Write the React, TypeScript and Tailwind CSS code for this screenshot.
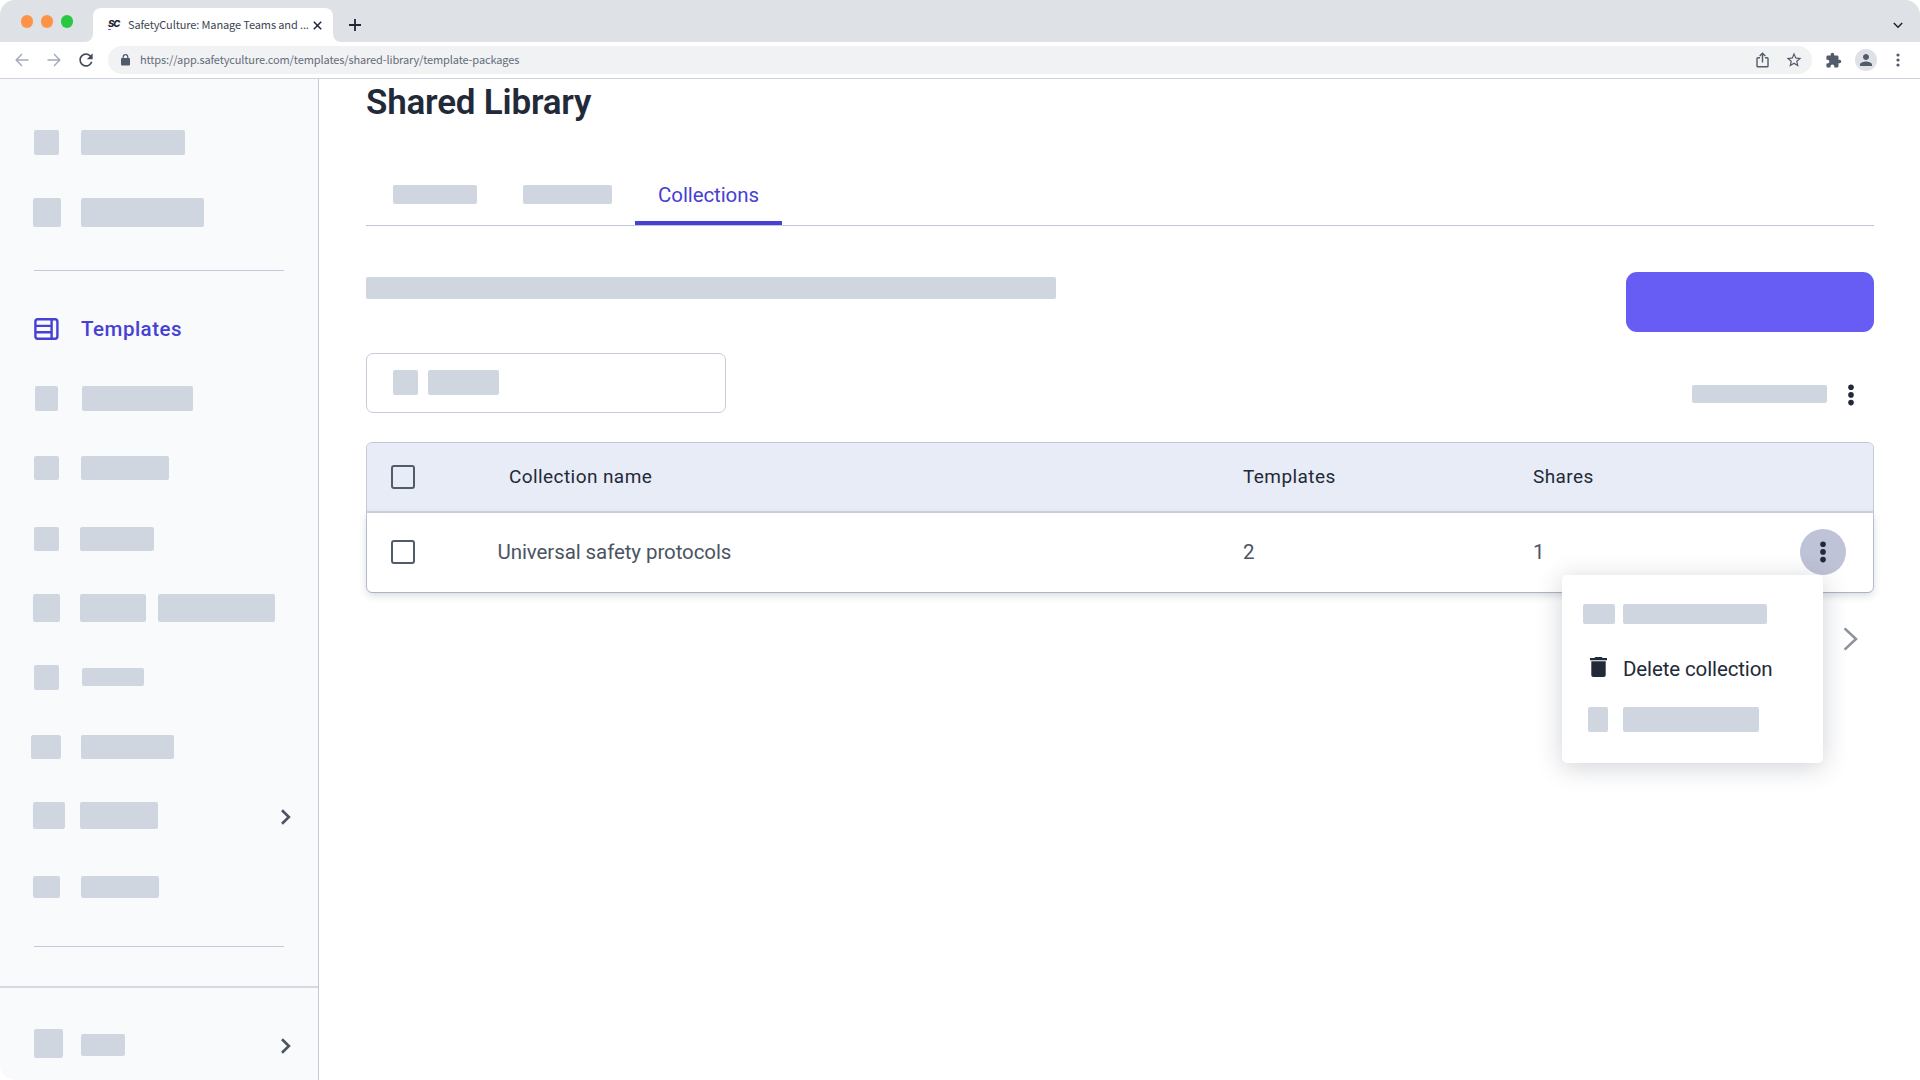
import type { ReactNode } from "react";
import clsx from "clsx";
import { MdExtension, MdPerson, MdRefresh, MdStarBorder } from "react-icons/md";

const Block = ({ className }: { className: string }) => <span className={clsx("block shrink-0 rounded-[2px] bg-[#d0d6e0]", className)} />;

const Dots = ({ className }: { className?: string }) => (
    <svg width="8" height="22" viewBox="0 0 8 22" fill="currentColor" className={clsx("shrink-0", className)}>
        <circle cx="4" cy="3.2" r="2.8" />
        <circle cx="4" cy="10.9" r="2.8" />
        <circle cx="4" cy="18.6" r="2.8" />
    </svg>
);

const Chevron = () => (
    <svg width="12" height="18" viewBox="0 0 12 18" fill="none" stroke="#4b5463" strokeWidth="2.6" className="ml-auto mr-[26px] shrink-0">
        <path d="M2 2.2 L8.9 9 L2 15.8" />
    </svg>
);

const Checkbox = () => <span className="block h-6 w-6 shrink-0 rounded-[3px] border-[2.5px] border-[#525b69]" />;

const TemplatesIcon = () => (
    <svg width="25" height="22" viewBox="0 0 25 22" fill="none" stroke="#4740d4" strokeWidth="2.4" className="shrink-0">
        <rect x="1.4" y="1.3" width="22" height="19.4" rx="2.4" />
        <path d="M17.6 1.3V20.7M1.3 7.9H17.6M1.3 14.2H17.6" />
    </svg>
);

const TrashIcon = () => (
    <svg width="17" height="20" viewBox="0 0 17 20" fill="currentColor" className="shrink-0">
        <path d="M5.4 0H11.6L12.6 1.1H17V3.3H0V1.1H4.4Z" />
        <path d="M1.3 4.3H15.7V18Q15.7 20 13.7 20H3.3Q1.3 20 1.3 18Z" />
    </svg>
);

const LockIcon = () => (
    <svg width="9" height="12" viewBox="0 0 9 12" className="shrink-0">
        <rect y="4" width="9" height="7.6" rx="1" fill="currentColor" />
        <path d="M2.2 4.5V3A2.3 2.3 0 0 1 6.8 3V4.5" fill="none" stroke="currentColor" strokeWidth="1.2" />
    </svg>
);

const SideRow = ({ className, children }: { className: string; children: ReactNode }) => (
    <div className={clsx("flex shrink-0 items-center", className)}>{children}</div>
);

const TabStrip = () => (
    <div className="flex h-[42px] shrink-0 items-end bg-[#dee1e6]">
        <div className="mb-[14.5px] ml-[20.5px] flex w-[72.5px] gap-[7.5px]">
            <span className="h-[12.5px] w-[12.5px] rounded-full bg-[#fd9347]" />
            <span className="h-[12.5px] w-[12.5px] rounded-full bg-[#fd9347]" />
            <span className="h-[12.5px] w-[12.5px] rounded-full bg-[#28c840]" />
        </div>
        <div className="relative flex h-[34px] w-[240px] items-center rounded-t-lg bg-white pl-[15px] text-[#3c4452]">
            <svg width="8" height="8" className="absolute bottom-0 -left-2">
                <path d="M8 0V8H0A8 8 0 0 0 8 0Z" fill="#fff" />
            </svg>
            <svg width="8" height="8" className="absolute -right-2 bottom-0">
                <path d="M0 0V8H8A8 8 0 0 1 0 0Z" fill="#fff" />
            </svg>
            <span className="flex w-[20px] flex-col">
                <span className="font-['Inter',sans-serif] text-[9.5px] leading-[8px] font-extrabold tracking-[-1px] text-[#1f2533] italic">SC</span>
                <span className="mt-px h-px w-[3px] bg-[#675df4]" />
            </span>
            <span className="mb-[2px] font-['Noto_Sans_CJK_SC',sans-serif] text-[11px] tracking-[-0.12px] whitespace-nowrap">
                SafetyCulture: Manage Teams and ...
            </span>
            <svg width="9" height="9" viewBox="0 0 9 9" stroke="#1f2533" strokeWidth="1.5" className="absolute top-[12.5px] left-[219.5px]">
                <path d="M0.8 0.8 L8.2 8.2 M8.2 0.8 L0.8 8.2" />
            </svg>
        </div>
        <svg width="12" height="12" viewBox="0 0 12 12" stroke="#1f2533" strokeWidth="1.8" className="mb-[11px] ml-[16px]">
            <path d="M6 0V12M0 6H12" />
        </svg>
        <svg width="10" height="7" viewBox="0 0 10 7" fill="none" stroke="#1f2533" strokeWidth="1.6" className="mr-[17px] mb-[13px] ml-auto">
            <path d="M0.8 1 L5 5.2 L9.2 1" />
        </svg>
    </div>
);

const Toolbar = () => (
    <div className="flex h-[37px] shrink-0 items-center border-b border-[#cdd3de] bg-white text-[#525b69]">
        <svg width="14" height="14" viewBox="0 0 14 14" fill="none" stroke="#a3a9b8" strokeWidth="1.4" className="ml-[15px]">
            <path d="M13.5 7H1.3M7 1L1.2 7L7 13" />
        </svg>
        <svg width="14" height="14" viewBox="0 0 14 14" fill="none" stroke="#a3a9b8" strokeWidth="1.4" className="ml-[18px]">
            <path d="M0.5 7H12.7M7 1L12.8 7L7 13" />
        </svg>
        <MdRefresh size={20} className="ml-[15px] text-[#434b59]" />
        <div className="ml-[12px] flex h-7 w-[1704px] items-center rounded-full bg-[#f1f2f4] pl-[13px]">
            <LockIcon />
            <span className="mb-[2px] ml-[10px] font-['Noto_Sans_CJK_SC',sans-serif] text-[11px] tracking-[-0.12px] whitespace-nowrap text-[#646c7a]">
                https://app.safetyculture.com/templates/shared-library/template-packages
            </span>
            <svg width="13" height="16" viewBox="0 0 13 16" fill="none" stroke="currentColor" strokeWidth="1.4" className="ml-auto">
                <path d="M4 5.7H1.8Q1 5.7 1 6.5V14Q1 14.8 1.8 14.8H11.2Q12 14.8 12 14V6.5Q12 5.7 11.2 5.7H9M6.5 10.5V1.5M3.7 4L6.5 1.2L9.3 4" />
            </svg>
            <MdStarBorder size={18} className="mr-[9px] ml-[16px]" />
        </div>
        <MdExtension size={17} className="ml-[13px]" />
        <span className="ml-[13px] flex h-[22px] w-[22px] items-center justify-center rounded-full bg-[#dee1e6]">
            <MdPerson size={18} />
        </span>
        <svg width="4" height="14" viewBox="0 0 4 14" fill="currentColor" className="ml-[19px]">
            <circle cx="2" cy="2" r="1.6" />
            <circle cx="2" cy="7" r="1.6" />
            <circle cx="2" cy="12" r="1.6" />
        </svg>
    </div>
);

const Sidebar = () => (
    <aside className="flex w-[319px] shrink-0 flex-col border-r border-[#c2c8d8] bg-[#f9fafc]">
        <SideRow className="mt-[51px] h-[25px] pl-[34px]">
            <Block className="h-[25px] w-[25px]" />
            <Block className="ml-[22px] h-[25px] w-[104px]" />
        </SideRow>
        <SideRow className="mt-[43px] h-[29px] pl-[33px]">
            <Block className="h-[29px] w-[28px]" />
            <Block className="ml-[20px] h-[29px] w-[123px]" />
        </SideRow>
        <hr className="mt-[43px] mr-[34px] ml-[34px] h-px shrink-0 border-0 bg-[#c2cad9]" />
        <SideRow className="mt-[47px] h-[22px] pl-[34px]">
            <TemplatesIcon />
            <span className="ml-[22px] text-[20.5px] font-medium tracking-[0.5px] text-[#4740d4]">Templates</span>
        </SideRow>
        <SideRow className="mt-[46px] h-[25px] pl-[35px]">
            <Block className="h-[25px] w-[23px]" />
            <Block className="ml-[24px] h-[25px] w-[111px]" />
        </SideRow>
        <SideRow className="mt-[45px] h-[24px] pl-[34px]">
            <Block className="h-[24px] w-[25px]" />
            <Block className="ml-[22px] h-[24px] w-[88px]" />
        </SideRow>
        <SideRow className="mt-[47px] h-[24px] pl-[34px]">
            <Block className="h-[24px] w-[25px]" />
            <Block className="ml-[21px] h-[24px] w-[74px]" />
        </SideRow>
        <SideRow className="mt-[43px] h-[28px] pl-[33px]">
            <Block className="h-[28px] w-[27px]" />
            <Block className="ml-[20px] h-[28px] w-[66px]" />
            <Block className="ml-[12px] h-[28px] w-[117px]" />
        </SideRow>
        <SideRow className="mt-[43px] h-[25px] pl-[34px]">
            <Block className="h-[25px] w-[25px]" />
            <Block className="mb-px ml-[23px] h-[18px] w-[62px]" />
        </SideRow>
        <SideRow className="mt-[45px] h-[24px] pl-[31px]">
            <Block className="h-[24px] w-[30px]" />
            <Block className="ml-[20px] h-[24px] w-[93px]" />
        </SideRow>
        <SideRow className="mt-[43px] h-[27px] pl-[33px]">
            <Block className="h-[27px] w-[32px]" />
            <Block className="ml-[15px] h-[27px] w-[78px]" />
            <div className="mt-[3px] ml-auto flex">
                <Chevron />
            </div>
        </SideRow>
        <SideRow className="mt-[47px] h-[22px] pl-[33px]">
            <Block className="h-[22px] w-[27px]" />
            <Block className="ml-[21px] h-[22px] w-[78px]" />
        </SideRow>
        <hr className="mt-[48px] mr-[34px] ml-[34px] h-px shrink-0 border-0 bg-[#c2cad9]" />
        <div className="mt-[39px] flex flex-1 flex-col border-t-2 border-[#d3d8e2] pt-[41px]">
            <SideRow className="h-[29px] pl-[34px]">
                <Block className="h-[29px] w-[29px]" />
                <Block className="mt-[2px] ml-[18px] h-[22px] w-[44px]" />
                <div className="mt-[5px] ml-auto flex">
                    <Chevron />
                </div>
            </SideRow>
        </div>
    </aside>
);

const RowMenu = () => (
    <div className="absolute top-[62px] right-[50px] flex h-[188px] w-[261px] flex-col rounded-[5px] bg-white pt-[29px] shadow-[0_4px_26px_rgba(40,50,75,0.22)]">
        <div className="flex h-[20px] pl-[21px]">
            <Block className="h-[20px] w-[32px]" />
            <Block className="ml-[8px] h-[20px] w-[144px]" />
        </div>
        <div className="mt-[30px] flex h-[28px] items-center pl-[28px] text-[#222938]">
            <div className="-mt-[2px]">
                <TrashIcon />
            </div>
            <span className="mt-[3px] ml-[16px] text-[20.5px] tracking-[-0.12px] whitespace-nowrap">Delete collection</span>
        </div>
        <div className="mt-[25px] flex h-[25px] pl-[26px]">
            <Block className="h-[25px] w-[20px]" />
            <Block className="ml-[15px] h-[25px] w-[136px]" />
        </div>
    </div>
);

const CollectionsTable = () => (
    <div className="mt-[29px] h-[151px] rounded-[6px] border border-[#c2c8da] bg-white">
        <div className="flex h-[70px] items-center rounded-t-[5px] border-b-2 border-[#cdd4e0] bg-[#e8ecf6] pl-[24px] text-[19px] tracking-[0.42px] text-[#222938]">
            <Checkbox />
            <span className="mt-px ml-[94px] w-[734px]">Collection name</span>
            <span className="mt-px w-[290px]">Templates</span>
            <span className="mt-px">Shares</span>
        </div>
        <div className="relative flex h-[79px] items-center rounded-b-[5px] pb-[2px] pl-[24px] text-[20.5px] text-[#4b5463] shadow-[0_3px_8px_rgba(40,50,75,0.2)]">
            <Checkbox />
            <span className="mt-px ml-[82.5px] w-[745.5px] tracking-[-0.09px]">Universal safety protocols</span>
            <span className="mt-px w-[290px]">2</span>
            <span className="mt-px">1</span>
            <span className="mr-[27px] ml-auto flex h-[46px] w-[46px] items-center justify-center rounded-full bg-[#bfc3d7]">
                <Dots className="text-[#222938]" />
            </span>
            <RowMenu />
        </div>
    </div>
);

const Main = () => (
    <main className="flex flex-1 flex-col bg-white pr-[46px] pl-[47px]">
        <h1 className="mt-[3px] h-[42px] text-[35px] leading-[42px] font-semibold tracking-[-0.2px] whitespace-nowrap text-[#222938]">
            Shared Library
        </h1>
        <div className="mt-[44px] flex h-[58px] border-b border-[#bfc6d8]">
            <Block className="mt-[17px] ml-[27px] h-[19px] w-[84px]" />
            <Block className="mt-[17px] ml-[46px] h-[19px] w-[89px]" />
            <div className="ml-[23px] flex h-[57px] w-[147px] flex-col items-center border-b-[4px] border-[#4740d4] pt-[11px] text-[20.5px] leading-[32px] tracking-[-0.1px] text-[#4740d4]">
                Collections
            </div>
        </div>
        <div className="mt-[46px] flex h-[60px] items-start justify-between">
            <Block className="mt-[5px] h-[22px] w-[690px]" />
            <button type="button" aria-label="Create" className="h-[60px] w-[248px] rounded-[11px] bg-[#675df4]" />
        </div>
        <div className="mt-[21px] flex h-[60px] items-center justify-between">
            <div className="flex h-[60px] w-[360px] items-center rounded-[7px] border border-[#c5cbd9] pb-px pl-[26px]">
                <Block className="h-[25px] w-[25px]" />
                <Block className="ml-[10px] h-[25px] w-[71px]" />
            </div>
            <div className="mt-[22px] mr-[19px] flex items-center">
                <Block className="h-[18px] w-[135px]" />
                <Dots className="mt-[2px] ml-[20px] text-[#222938]" />
            </div>
        </div>
        <CollectionsTable />
        <svg width="16" height="24" viewBox="0 0 16 24" fill="none" stroke="#8e939e" strokeWidth="2.6" className="mt-[34px] mr-[15px] ml-auto">
            <path d="M1.6 1.4 L13 12 L1.6 22.6" />
        </svg>
    </main>
);

const App = () => {
    return (
        <div className="flex h-[1080px] w-[1920px] flex-col overflow-hidden rounded-[15px] bg-white font-['Roboto',sans-serif]">
            <TabStrip />
            <Toolbar />
            <div className="flex flex-1">
                <Sidebar />
                <Main />
            </div>
        </div>
    );
};

export default App;
